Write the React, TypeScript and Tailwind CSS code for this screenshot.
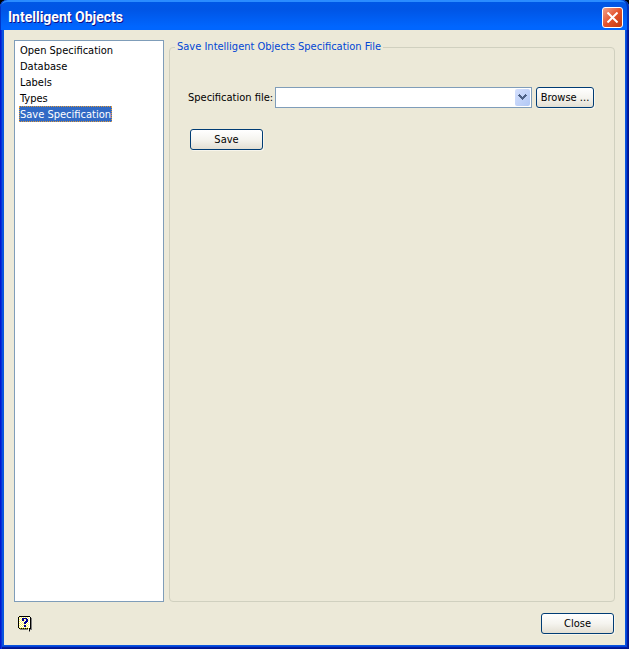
import React, { useState } from 'react';

const pages = ['Open Specification', 'Database', 'Labels', 'Types', 'Save Specification'];

const buttonClass =
  'h-[21px] rounded-[3px] border border-[#003c74] bg-linear-to-b from-white via-[#f5f4ef] to-[#e3dfd3] text-center leading-4 shadow-[1px_1px_0_#f7f5ec]';

// yellow dots on every second pixel of the help balloon
const dots = Array.from({ length: 12 }, (_, row) =>
  Array.from({ length: 5 }, (_, i) => `M${1 + i * 2 + (row % 2)} ${1 + row}h1v1h-1z`).join('')
).join('');

function CloseIcon() {
  return (
    <svg className="h-[11px] w-[11px]" viewBox="0 0 11 11" fill="none" stroke="#fff" strokeWidth="2" aria-hidden="true">
      <path d="M0.5 0.5 10.5 10.5M10.5 0.5 0.5 10.5" />
    </svg>
  );
}

function ChevronIcon() {
  return (
    <svg className="h-[7px] w-[9px]" viewBox="0 0 9 7" fill="#4d6185" shapeRendering="crispEdges" aria-hidden="true">
      <path d="M1 0h1v1h1v1h1v1h1v-1h1v-1h1v-1h1v1h1v1h-1v1h-1v1h-1v1h-1v1h-1v-1h-1v-1h-1v-1h-1v-1h-1v-1h1z" />
    </svg>
  );
}

function HelpIcon() {
  return (
    <svg className="h-4 w-[14px]" viewBox="0 0 14 16" shapeRendering="crispEdges" aria-hidden="true">
      <path d="M2 1h11v1h1v12h-2v2h-1v-2h-9z" fill="#808080" />
      <path d="M1 0h11v1h1v12h-1v2h-1v-1h-1v-1h-9v-1h-1v-11h1z" fill="#000" />
      <path d="M1 1h11v11h-1v2h-1v-2h-9z" fill="#fff" />
      <path d={dots} fill="#fff000" fillOpacity="0.6" />
      <path
        d="M4 2h5v1h1v3h-1v1h-1v1h-2v-2h1v-1h1v-2h-2v2h-2zM6 9h2v2h-2z"
        fill="#000090"
      />
    </svg>
  );
}

export default function App() {
  const [selected, setSelected] = useState('Save Specification');

  return (
    <div className="flex min-h-screen flex-col bg-black font-['DejaVu_Sans_Condensed','DejaVu_Sans',sans-serif] text-[11px] leading-4 text-black">
      <header className="flex h-[30px] items-center justify-between rounded-t-[7px] bg-linear-to-b from-[#0058e6] from-0% via-[#0055e5] via-30% to-[#0066ff] to-90% pt-1 pr-[6px] pl-2 shadow-[inset_1px_0_#0034c8,inset_-2px_0_#0030b8,inset_0_2px_#2a8cff]">
        <h1 className="font-['Roboto',sans-serif] text-[14px] font-bold text-white [text-shadow:1px_1px_#0f1089]">
          Intelligent Objects
        </h1>
        <button
          type="button"
          aria-label="Close window"
          className="flex h-[21px] w-[21px] items-center justify-center rounded-[3px] border border-white bg-linear-to-br from-[#f0a088] via-[#e3522b] to-[#c13a10]"
        >
          <CloseIcon />
        </button>
      </header>

      <div className="flex flex-1 flex-col bg-[#0855dd] px-1 pb-1 shadow-[inset_1px_0_#0019cf,inset_2px_0_#0831d9,inset_-1px_-1px_#00138c,inset_-2px_-2px_#001ea0,inset_-3px_-3px_#0441d8]">
        <main className="flex flex-1 flex-col bg-[#ece9d8] px-[10px] pt-[10px] pb-[11px]">
          <div className="flex flex-1 gap-[5px]">
            <nav className="w-[150px] shrink-0 border border-[#7f9db9] bg-white px-1 py-px">
              <ul>
                {pages.map((page) => (
                  <li key={page} className="flex h-4">
                    <button
                      type="button"
                      onClick={() => setSelected(page)}
                      className={
                        page === selected
                          ? 'border border-dotted border-[#e09a3a] bg-[#316ac5] leading-4 text-white'
                          : 'border border-transparent leading-4'
                      }
                    >
                      {page}
                    </button>
                  </li>
                ))}
              </ul>
            </nav>

            <fieldset className="min-w-0 flex-1 rounded-[4px] border border-[#d0d0bf] pr-5 pl-[18px]">
              <legend className="-ml-[13px] px-[2px] leading-[14px] text-[#0046d5]">
                Save Intelligent Objects Specification File
              </legend>
              <div className="flex items-center pt-[33px]">
                <label htmlFor="spec-file" className="mr-[2px] shrink-0">
                  Specification file:
                </label>
                <div className="relative mr-1 flex-1">
                  <select
                    id="spec-file"
                    className="block h-[21px] w-full appearance-none border border-[#7f9db9] bg-white pr-5 pl-1"
                  >
                    <option value=""></option>
                  </select>
                  <span className="pointer-events-none absolute inset-y-[2px] right-[2px] flex w-[15px] items-center justify-center rounded-[2px] bg-linear-to-br from-[#d5e0fd] to-[#b1c8f5]">
                    <ChevronIcon />
                  </span>
                </div>
                <button type="button" className={`${buttonClass} w-[58px] shrink-0`}>
                  Browse ...
                </button>
              </div>
              <button type="button" className={`${buttonClass} mt-[21px] ml-[2px] block w-[73px]`}>
                Save
              </button>
            </fieldset>
          </div>

          <footer className="mt-[11px] flex items-center justify-between pr-px pl-1">
            <button type="button" aria-label="Help">
              <HelpIcon />
            </button>
            <button type="button" className={`${buttonClass} w-[73px]`}>
              Close
            </button>
          </footer>
        </main>
      </div>
    </div>
  );
}
